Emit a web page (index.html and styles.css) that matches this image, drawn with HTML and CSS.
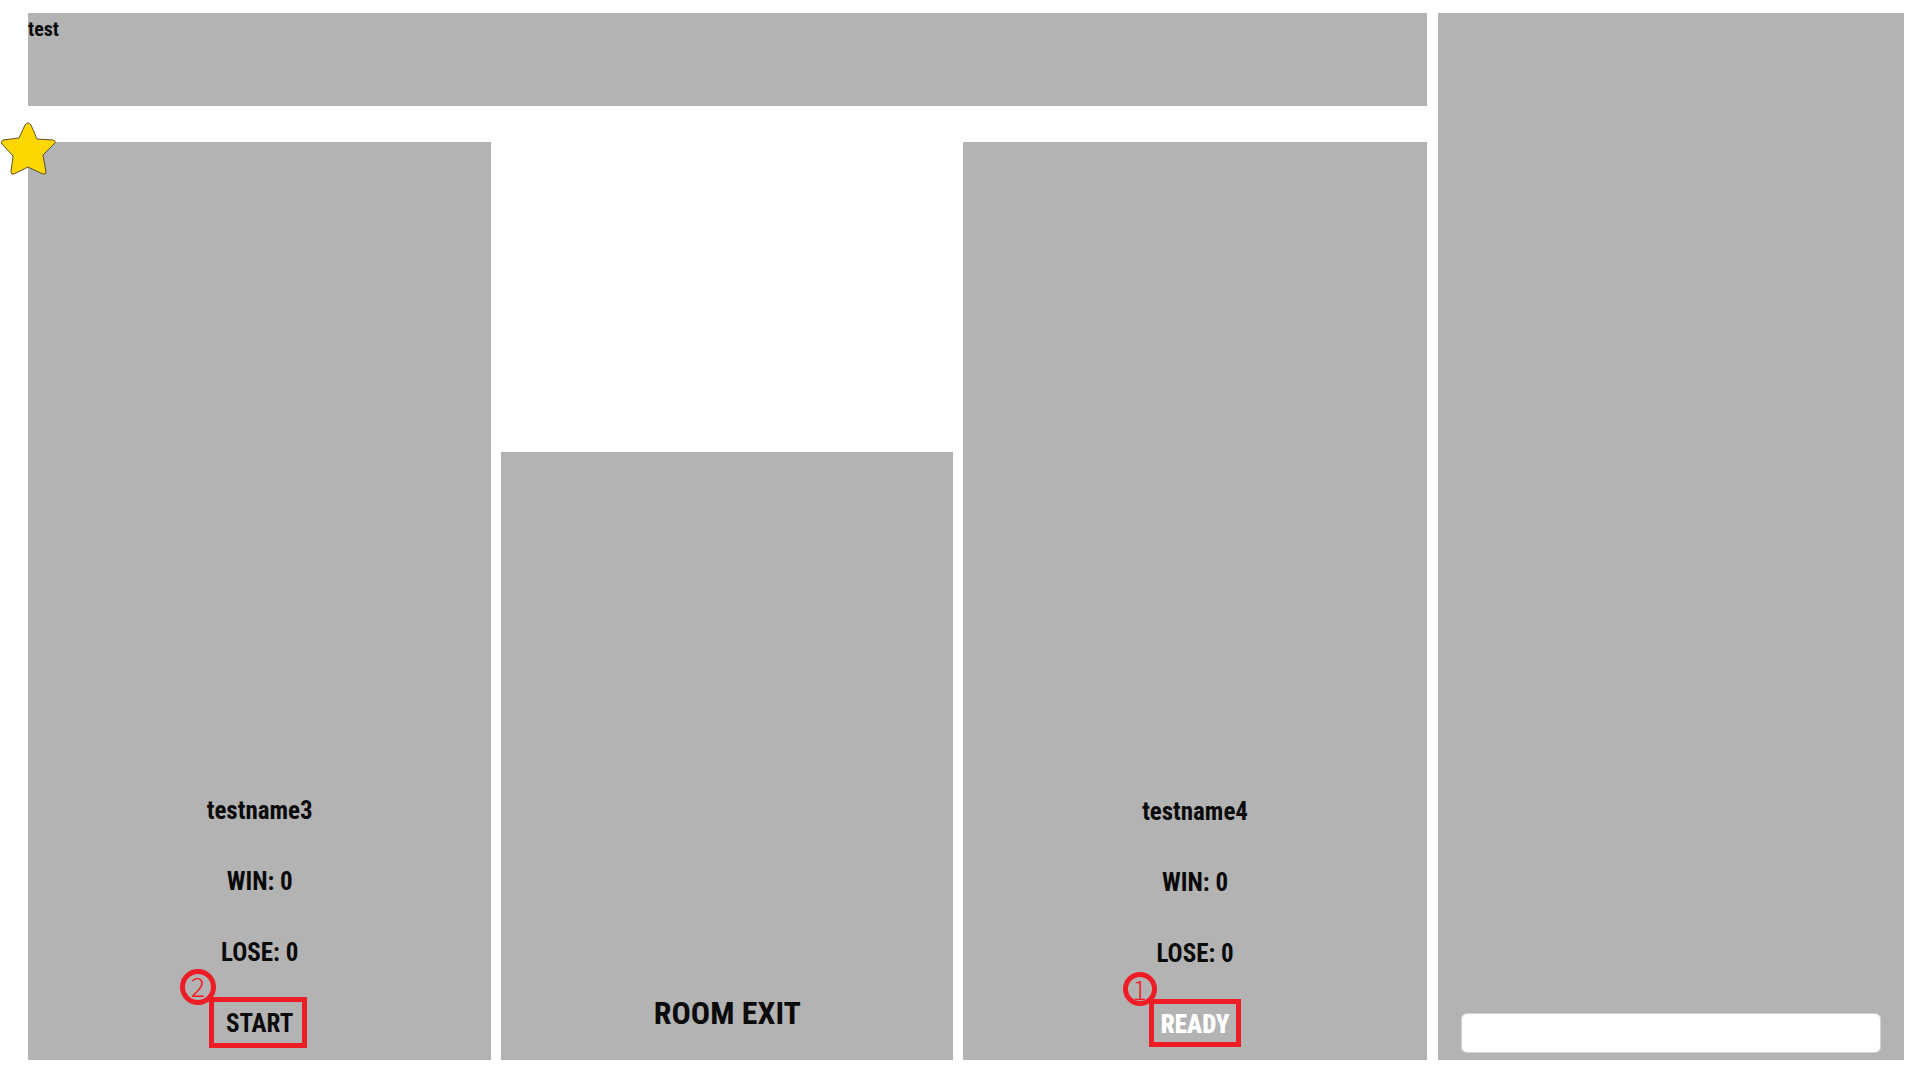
FILE: index.html
```html
<!DOCTYPE html>
<html lang="en">
<head>
<meta charset="utf-8">
<title>Room</title>
<meta name="viewport" content="width=device-width, initial-scale=1">
<link rel="stylesheet" href="styles.css">
</head>
<body>
<div class="room">
  <main class="main">
    <header class="title">test</header>
    <div class="board">
      <section class="player">
        <svg class="star" viewBox="0 0 56 54" aria-label="Room owner"><path d="M25 3Q28-1 31 3L37 17L53 18Q57 19 54 22L43 33L46 50Q46 53 43 52L28 45L14 52Q11 53 11 50L13 34L2 22Q0 19 3 18L19 16Z" fill="#ffd700" stroke="#5c5130" stroke-width="1"/></svg>
        <p class="line">testname3</p>
        <p class="line">WIN: 0</p>
        <p class="line">LOSE: 0</p>
        <div class="action action-start">
          <button class="line" type="button">START</button>
          <span class="frame"></span>
          <span class="step">2</span>
        </div>
      </section>
      <section class="exit">
        <button class="exit-button" type="button">ROOM EXIT</button>
      </section>
      <section class="player player-guest">
        <p class="line">testname4</p>
        <p class="line">WIN: 0</p>
        <p class="line">LOSE: 0</p>
        <div class="action action-ready">
          <button class="line ready" type="button">READY</button>
          <span class="frame"></span>
          <span class="step">1</span>
        </div>
      </section>
    </div>
  </main>
  <aside class="chat">
    <input class="message" type="text" aria-label="Message">
  </aside>
</div>
</body>
</html>
```
FILE: styles.css
```css
* {
  box-sizing: border-box;
}

body {
  margin: 0;
  background: #fff;
  color: #0a0a0a;
  font-family: "Roboto Condensed", Roboto, sans-serif;
  font-weight: 700;
}

button {
  padding: 0;
  border: 0;
  background: none;
  color: inherit;
  font: inherit;
  cursor: pointer;
}

.room {
  display: grid;
  grid-template-columns: 3fr 1fr;
  gap: 11px;
  min-height: 100vh;
  padding: 13px 16px 20px 28px;
}

.main {
  display: flex;
  flex-direction: column;
  gap: 36px;
}

.title,
.player,
.exit,
.chat {
  background: #b3b3b3;
}

.title {
  min-height: 93px;
  padding-top: 4px;
  font-size: 20px;
  line-height: 24px;
}

.board {
  flex: 1;
  display: grid;
  grid-template-columns: 41fr 40fr 41fr;
  gap: 10px;
}

.player {
  position: relative;
  display: flex;
  flex-direction: column;
  align-items: center;
  justify-content: flex-end;
  gap: 41px;
  padding-bottom: 21px;
}

.player-guest {
  padding-bottom: 20px;
}

.line {
  margin: 0;
  font-size: 25px;
  line-height: 30px;
}

.star {
  position: absolute;
  top: -20px;
  left: -28px;
  width: 56px;
  height: 54px;
}

.action {
  position: relative;
  display: flex;
}

.ready {
  color: #fff;
  font-weight: 900;
}

.frame {
  position: absolute;
  inset: -12px -14px -9px -17px;
  border: 5px solid #ee1c25;
  pointer-events: none;
}

.action-ready .frame {
  inset: -11px -12px -7px;
}

.step {
  position: absolute;
  top: -40px;
  left: -46px;
  width: 36px;
  height: 36px;
  border: 5px solid #ee1c25;
  border-radius: 50%;
  color: #ee1c25;
  font-family: "Noto Sans CJK KR", sans-serif;
  font-size: 27px;
  font-weight: 300;
  line-height: 24px;
  text-align: center;
}

.action-ready .step {
  top: -38px;
  left: -38px;
  width: 34px;
  height: 34px;
}

.exit {
  display: flex;
  align-items: flex-end;
  justify-content: center;
  align-self: end;
  height: 66.2%;
  padding-bottom: 27px;
}

.exit-button {
  font-size: 32px;
  line-height: 40px;
}

.chat {
  display: flex;
  flex-direction: column;
  justify-content: flex-end;
  padding: 7px 23px;
}

.message {
  width: 100%;
  height: 40px;
  padding: 6px 12px;
  border: 1px solid #ced4da;
  border-radius: 6px;
  background: #fff;
  font: inherit;
}
```
